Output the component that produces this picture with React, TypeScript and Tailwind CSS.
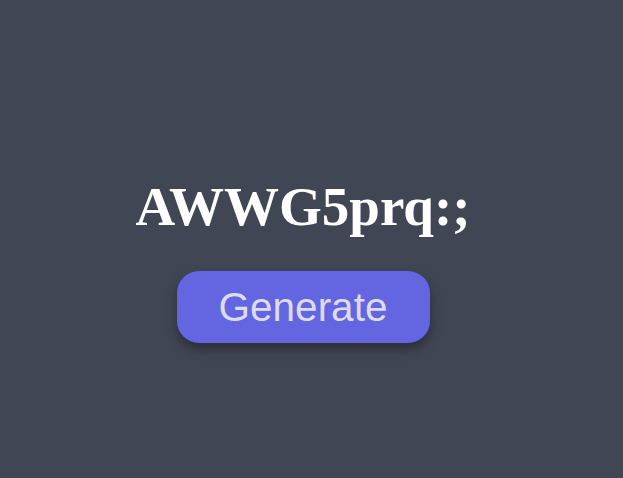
export default function App() {
	return (
		<div className="min-h-screen w-full bg-[#414655] flex flex-col items-center justify-center pr-[17px] pt-[44px]">
			<h1 className="font-['Liberation_Serif',serif] font-bold text-[55px] leading-none text-white">
				AWWG5prq:;
			</h1>
			<button className="mt-[37px] w-[253px] h-[72px] rounded-[22px] bg-[#6366e0] text-[#dcdcef] font-['Liberation_Sans',Arial,sans-serif] text-[40.5px] shadow-[0_6px_12px_rgba(0,0,0,0.35)]">
				Generate
			</button>
		</div>
	);
}
